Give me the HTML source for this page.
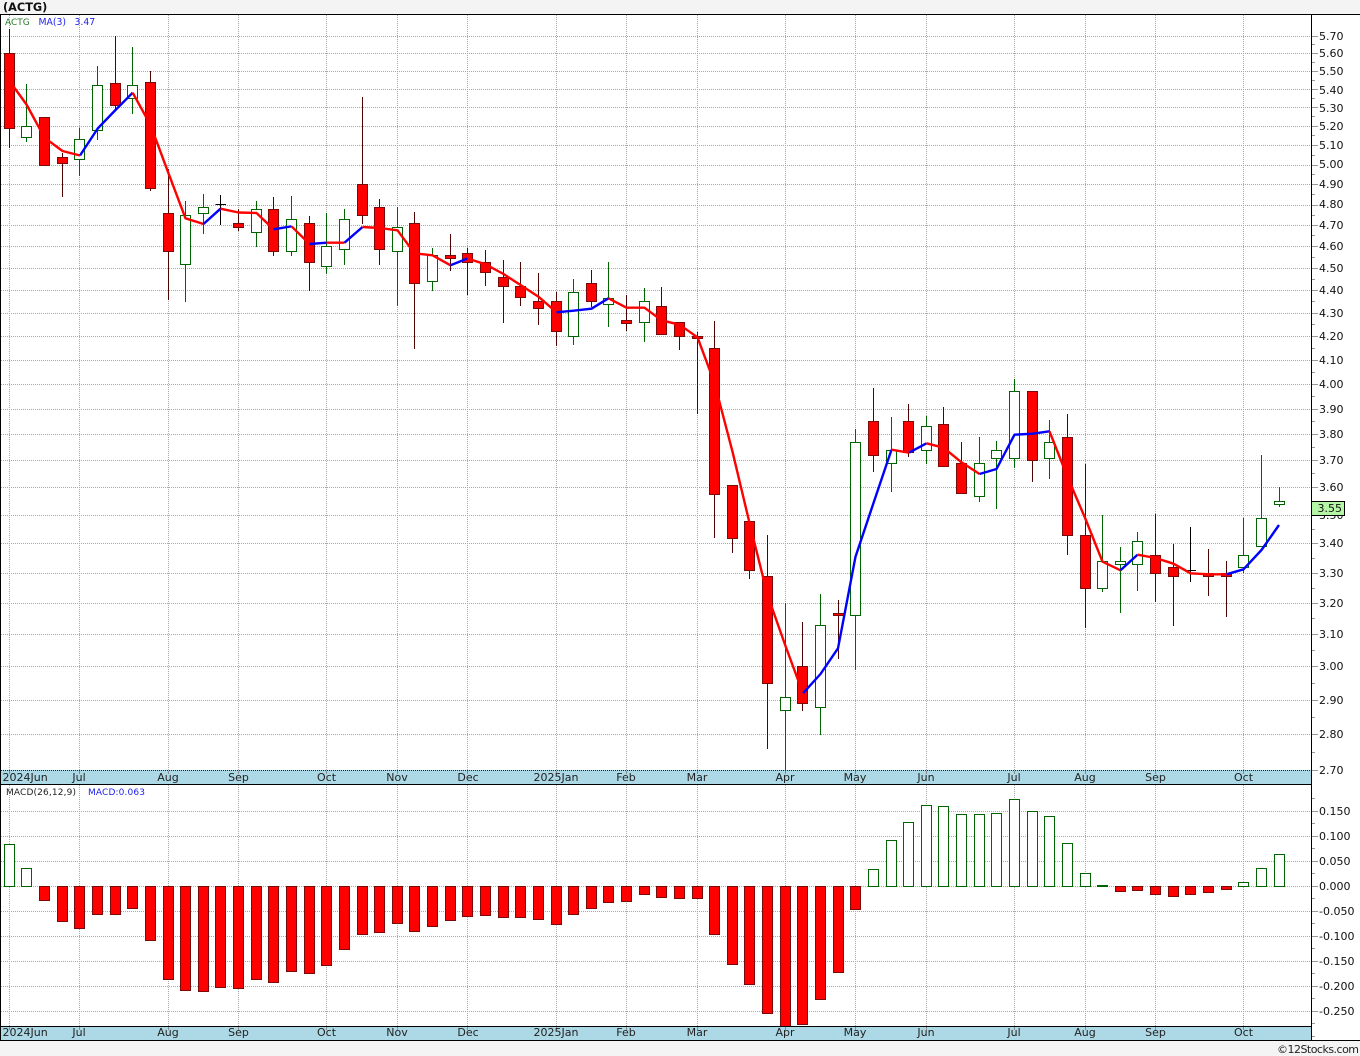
<!DOCTYPE html>
<html><head><meta charset="utf-8"><title>ACTG</title>
<style>
html,body{margin:0;padding:0;background:#f4f4f4;width:1360px;height:1056px;overflow:hidden}
svg{display:block;position:absolute;left:0;top:0}
text{font-family:"DejaVu Sans","Liberation Sans",sans-serif;font-size:11px;fill:#111}
.m text{text-anchor:middle;fill:#222}
</style></head><body>
<svg width="1360" height="1056" viewBox="0 0 1360 1056" xmlns="http://www.w3.org/2000/svg">
<rect x="0" y="0" width="1360" height="1056" fill="#f4f4f4"/>
<rect x="0" y="14" width="1360" height="1027" fill="#fff"/>

<!-- grid -->
<g shape-rendering="crispEdges" fill="none" stroke="#a8a8a8" stroke-dasharray="1 1">
<path d="M1 36.5H1311M1 53.5H1311M1 71.5H1311M1 89.5H1311M1 107.5H1311M1 126.5H1311M1 145.5H1311M1 165.5H1311M1 184.5H1311M1 205.5H1311M1 225.5H1311M1 246.5H1311M1 268.5H1311M1 290.5H1311M1 313.5H1311M1 336.5H1311M1 360.5H1311M1 384.5H1311M1 409.5H1311M1 434.5H1311M1 460.5H1311M1 487.5H1311M1 515.5H1311M1 543.5H1311M1 573.5H1311M1 603.5H1311M1 634.5H1311M1 666.5H1311M1 700.5H1311M1 734.5H1311"/>
<path d="M1 811.5H1311M1 836.5H1311M1 861.5H1311M1 886.5H1311M1 911.5H1311M1 936.5H1311M1 961.5H1311M1 986.5H1311M1 1011.5H1311"/>
<path d="M9.5 15V770M79.5 15V770M168.5 15V770M238.5 15V770M326.5 15V770M397.5 15V770M467.5 15V770M556.5 15V770M626.5 15V770M697.5 15V770M785.5 15V770M855.5 15V770M926.5 15V770M1014.5 15V770M1085.5 15V770M1155.5 15V770M1243.5 15V770"/>
<path d="M9.5 785V1026M79.5 785V1026M168.5 785V1026M238.5 785V1026M326.5 785V1026M397.5 785V1026M467.5 785V1026M556.5 785V1026M626.5 785V1026M697.5 785V1026M785.5 785V1026M855.5 785V1026M926.5 785V1026M1014.5 785V1026M1085.5 785V1026M1155.5 785V1026M1243.5 785V1026"/>
</g>

<!-- wicks -->
<g shape-rendering="crispEdges" fill="none" stroke-width="1">
<path stroke="#500505" d="M9.5 29V148M62.5 153V197M115.5 36V109M150.5 71V191M168.5 169V300M238.5 209V231M273.5 197V256M309.5 216V291M362.5 97V224M379.5 199V265M414.5 212V349M450.5 234V271M467.5 248V295M485.5 250V286M503.5 260V323M520.5 262V306M538.5 273V325M556.5 292V346M591.5 270V307M626.5 295V331M661.5 287V334M679.5 322V350M697.5 332V414M714.5 321V538M732.5 485V553M749.5 521V579M767.5 535V749M802.5 622V711M838.5 600V659M873.5 388V472M908.5 404V457M943.5 407V467M961.5 442V494M1032.5 391V482M1067.5 414V555M1085.5 464V628M1155.5 514V602M1173.5 544V626M1208.5 549V596M1226.5 561V617"/>
<path stroke="#006400" d="M26.5 84V142M79.5 128V176M97.5 66V140M132.5 47V114M185.5 201V302M203.5 194V234M256.5 201V247M291.5 196V256M326.5 213V274M344.5 209V265M397.5 207V306M432.5 248V291M573.5 279V345M608.5 262V327M644.5 288V342M785.5 603V770M820.5 594V735M855.5 429V670M891.5 417V492M926.5 416V464M979.5 437V502M996.5 441V509M1014.5 379V468M1049.5 420V479M1102.5 515V592M1120.5 547V613M1137.5 532V591M1243.5 518V573M1261.5 455V518M1279.5 487V507"/>
<path stroke="#000" d="M220.5 195V225M215.5 204.5H226M1190.5 527V582M1185.5 570.5H1196"/>
</g>

<!-- bodies -->
<g shape-rendering="crispEdges" stroke-width="1">
<path fill="#ff0000" stroke="#7a0a0a" d="M4.5 53.5h10V128.5h-10zM39.5 117.5h10V165.5h-10zM57.5 157.5h10V163.5h-10zM110.5 83.5h10V105.5h-10zM145.5 82.5h10V188.5h-10zM163.5 213.5h10V251.5h-10zM233.5 223.5h10V227.5h-10zM268.5 209.5h10V251.5h-10zM304.5 223.5h10V262.5h-10zM357.5 184.5h10V215.5h-10zM374.5 207.5h10V249.5h-10zM409.5 223.5h10V283.5h-10zM445.5 255.5h10V258.5h-10zM462.5 253.5h10V262.5h-10zM480.5 262.5h10V272.5h-10zM498.5 277.5h10V286.5h-10zM515.5 286.5h10V297.5h-10zM533.5 301.5h10V308.5h-10zM551.5 301.5h10V331.5h-10zM586.5 283.5h10V301.5h-10zM621.5 320.5h10V323.5h-10zM656.5 306.5h10V334.5h-10zM674.5 322.5h10V336.5h-10zM692.5 336.5h10V338.5h-10zM709.5 348.5h10V494.5h-10zM727.5 485.5h10V538.5h-10zM744.5 521.5h10V570.5h-10zM762.5 576.5h10V683.5h-10zM797.5 666.5h10V703.5h-10zM833.5 613.5h10V615.5h-10zM868.5 421.5h10V455.5h-10zM903.5 421.5h10V452.5h-10zM938.5 424.5h10V466.5h-10zM956.5 463.5h10V493.5h-10zM1027.5 391.5h10V460.5h-10zM1062.5 437.5h10V535.5h-10zM1080.5 535.5h10V588.5h-10zM1150.5 555.5h10V573.5h-10zM1168.5 567.5h10V576.5h-10zM1203.5 573.5h10V576.5h-10zM1221.5 573.5h10V576.5h-10z"/>
<path fill="#fff" stroke="#006400" d="M21.5 126.5h10V137.5h-10zM74.5 139.5h10V159.5h-10zM92.5 85.5h10V130.5h-10zM127.5 85.5h10V98.5h-10zM180.5 215.5h10V264.5h-10zM198.5 207.5h10V213.5h-10zM251.5 209.5h10V232.5h-10zM286.5 219.5h10V251.5h-10zM321.5 246.5h10V266.5h-10zM339.5 219.5h10V249.5h-10zM392.5 227.5h10V251.5h-10zM427.5 255.5h10V281.5h-10zM568.5 292.5h10V336.5h-10zM603.5 298.5h10V304.5h-10zM639.5 301.5h10V322.5h-10zM780.5 697.5h10V710.5h-10zM815.5 625.5h10V707.5h-10zM850.5 442.5h10V615.5h-10zM886.5 450.5h10V463.5h-10zM921.5 426.5h10V450.5h-10zM974.5 463.5h10V496.5h-10zM991.5 450.5h10V458.5h-10zM1009.5 391.5h10V458.5h-10zM1044.5 442.5h10V458.5h-10zM1097.5 561.5h10V588.5h-10zM1115.5 561.5h10V564.5h-10zM1132.5 541.5h10V564.5h-10zM1238.5 555.5h10V567.5h-10zM1256.5 518.5h10V546.5h-10zM1274.5 501.5h10V504.5h-10z"/>
</g>

<!-- moving average -->
<g fill="none" stroke-width="2.4" stroke-linejoin="round">
<polyline stroke="#ff0000" points="9.5,81 26.5,104.5 44.5,137.7 62.5,151 80,155.5"/>
<polyline stroke="#0000ff" points="80,155.5 97.7,128.5 115.5,110 132.7,92.7"/>
<polyline stroke="#ff0000" points="132.7,92.7 150.5,125 168.5,173.3 185.5,218.3 203.5,224"/>
<polyline stroke="#0000ff" points="203.5,224 220.5,208.7"/>
<polyline stroke="#ff0000" points="220.5,208.7 238.5,212.5 256.5,213 273.5,229.3"/>
<polyline stroke="#0000ff" points="273.5,229.3 291.5,226.3"/>
<polyline stroke="#ff0000" points="291.5,226.3 309.5,244"/>
<polyline stroke="#0000ff" points="309.5,244 326.5,242.7"/>
<polyline stroke="#ff0000" points="326.5,242.7 344.5,242.7"/>
<polyline stroke="#0000ff" points="344.5,242.7 362.5,227"/>
<polyline stroke="#ff0000" points="362.5,227 379.5,228 397.5,230.3 414.5,253.3 432.5,255.3 450.5,265.3"/>
<polyline stroke="#0000ff" points="450.5,265.3 467.5,258.5"/>
<polyline stroke="#ff0000" points="467.5,258.5 485.5,264.3 503.5,274 520.5,285 538.5,296.7 556.5,312.3"/>
<polyline stroke="#0000ff" points="556.5,312.3 573.5,310.7 591.5,308.7 608.5,298.3"/>
<polyline stroke="#ff0000" points="608.5,298.3 626.5,307.7 644.5,307.7 661.5,320.3 679.5,324.7 697.5,337.3 714.5,383 732.5,451.7 749.5,523 767.5,595 785.5,646 803,693.3"/>
<polyline stroke="#0000ff" points="803,693.3 820.5,674 838,648.3 855.5,556.7 873.5,503 891.5,449.7"/>
<polyline stroke="#ff0000" points="891.5,449.7 909,452.7"/>
<polyline stroke="#0000ff" points="909,452.7 926.5,443.3"/>
<polyline stroke="#ff0000" points="926.5,443.3 943.5,447.7 961.5,462.3 979.5,474"/>
<polyline stroke="#0000ff" points="979.5,474 996.5,469 1014.5,434.7 1032.5,433.7 1049.5,431.3"/>
<polyline stroke="#ff0000" points="1049.5,431.3 1067.5,477 1085.5,519 1102.5,561.7 1120.5,570.3"/>
<polyline stroke="#0000ff" points="1120.5,570.3 1137.5,554.7"/>
<polyline stroke="#ff0000" points="1137.5,554.7 1155.5,558 1173.5,563.7 1190.5,573.3 1208.5,574.3 1226.5,574.3"/>
<polyline stroke="#0000ff" points="1226.5,574.3 1243.5,569.3 1261.5,550 1279,525"/>
</g>

<!-- MACD bars -->
<g shape-rendering="crispEdges" stroke-width="1">
<path fill="#fff" stroke="#006400" d="M4.5 844.5h10V886.5h-10zM21.5 868.5h10V886.5h-10zM868.5 869.5h10V886.5h-10zM886.5 840.5h10V886.5h-10zM903.5 822.5h10V886.5h-10zM921.5 805.5h10V886.5h-10zM938.5 806.5h10V886.5h-10zM956.5 814.5h10V886.5h-10zM974.5 814.5h10V886.5h-10zM991.5 813.5h10V886.5h-10zM1009.5 799.5h10V886.5h-10zM1027.5 811.5h10V886.5h-10zM1044.5 816.5h10V886.5h-10zM1062.5 843.5h10V886.5h-10zM1080.5 873.5h10V886.5h-10zM1097.5 885.5h10V886.5h-10zM1238.5 882.5h10V886.5h-10zM1256.5 868.5h10V886.5h-10zM1274.5 854.5h10V886.5h-10z"/>
<path fill="#ff0000" stroke="#7a0a0a" d="M39.5 886.5h10V900.5h-10zM57.5 886.5h10V921.5h-10zM74.5 886.5h10V928.5h-10zM92.5 886.5h10V914.5h-10zM110.5 886.5h10V914.5h-10zM127.5 886.5h10V908.5h-10zM145.5 886.5h10V940.5h-10zM163.5 886.5h10V979.5h-10zM180.5 886.5h10V990.5h-10zM198.5 886.5h10V991.5h-10zM215.5 886.5h10V987.5h-10zM233.5 886.5h10V988.5h-10zM251.5 886.5h10V979.5h-10zM268.5 886.5h10V982.5h-10zM286.5 886.5h10V971.5h-10zM304.5 886.5h10V973.5h-10zM321.5 886.5h10V965.5h-10zM339.5 886.5h10V949.5h-10zM357.5 886.5h10V934.5h-10zM374.5 886.5h10V932.5h-10zM392.5 886.5h10V923.5h-10zM409.5 886.5h10V931.5h-10zM427.5 886.5h10V926.5h-10zM445.5 886.5h10V920.5h-10zM462.5 886.5h10V916.5h-10zM480.5 886.5h10V915.5h-10zM498.5 886.5h10V917.5h-10zM515.5 886.5h10V917.5h-10zM533.5 886.5h10V919.5h-10zM551.5 886.5h10V924.5h-10zM568.5 886.5h10V914.5h-10zM586.5 886.5h10V908.5h-10zM603.5 886.5h10V902.5h-10zM621.5 886.5h10V901.5h-10zM639.5 886.5h10V894.5h-10zM656.5 886.5h10V897.5h-10zM674.5 886.5h10V898.5h-10zM692.5 886.5h10V898.5h-10zM709.5 886.5h10V934.5h-10zM727.5 886.5h10V964.5h-10zM744.5 886.5h10V984.5h-10zM762.5 886.5h10V1013.5h-10zM780.5 886.5h10V1030h-10zM797.5 886.5h10V1024.5h-10zM815.5 886.5h10V999.5h-10zM833.5 886.5h10V972.5h-10zM850.5 886.5h10V909.5h-10zM1115.5 886.5h10V891.5h-10zM1132.5 886.5h10V890.5h-10zM1150.5 886.5h10V894.5h-10zM1168.5 886.5h10V896.5h-10zM1185.5 886.5h10V894.5h-10zM1203.5 886.5h10V892.5h-10zM1221.5 886.5h10V889.5h-10z"/>
</g>

<!-- strips -->
<g shape-rendering="crispEdges">
<rect x="1" y="770" width="1310" height="14" fill="#add8e6"/>
<rect x="1" y="1026" width="1310" height="14" fill="#add8e6"/>
<path d="M1 770.5H1311" stroke="#222" stroke-dasharray="1 1" fill="none"/>
<path stroke="#8c8c8c" fill="none" d="M9.5 771V774M79.5 771V774M168.5 771V774M238.5 771V774M326.5 771V774M397.5 771V774M467.5 771V774M556.5 771V774M626.5 771V774M697.5 771V774M785.5 771V774M855.5 771V774M926.5 771V774M1014.5 771V774M1085.5 771V774M1155.5 771V774M1243.5 771V774M9.5 1027V1030M79.5 1027V1030M168.5 1027V1030M238.5 1027V1030M326.5 1027V1030M397.5 1027V1030M467.5 1027V1030M556.5 1027V1030M626.5 1027V1030M697.5 1027V1030M785.5 1027V1030M855.5 1027V1030M926.5 1027V1030M1014.5 1027V1030M1085.5 1027V1030M1155.5 1027V1030M1243.5 1027V1030"/>
<!-- axis panel background -->
<rect x="1312" y="15" width="48" height="1025" fill="#fff"/>
<!-- axis ticks -->
<path stroke="#999" fill="none" d="M1311 36.5h7M1311 53.5h7M1311 71.5h7M1311 89.5h7M1311 107.5h7M1311 126.5h7M1311 145.5h7M1311 165.5h7M1311 184.5h7M1311 205.5h7M1311 225.5h7M1311 246.5h7M1311 268.5h7M1311 290.5h7M1311 313.5h7M1311 336.5h7M1311 360.5h7M1311 384.5h7M1311 409.5h7M1311 434.5h7M1311 460.5h7M1311 487.5h7M1311 515.5h7M1311 543.5h7M1311 573.5h7M1311 603.5h7M1311 634.5h7M1311 666.5h7M1311 700.5h7M1311 734.5h7M1311 770.5h7M1311 44.5h4M1311 62.5h4M1311 80.5h4M1311 98.5h4M1311 116.5h4M1311 135.5h4M1311 155.5h4M1311 174.5h4M1311 194.5h4M1311 215.5h4M1311 235.5h4M1311 257.5h4M1311 279.5h4M1311 301.5h4M1311 324.5h4M1311 348.5h4M1311 372.5h4M1311 396.5h4M1311 421.5h4M1311 447.5h4M1311 473.5h4M1311 501.5h4M1311 529.5h4M1311 558.5h4M1311 588.5h4M1311 618.5h4M1311 650.5h4M1311 683.5h4M1311 717.5h4M1311 752.5h4M1311 811.5h7M1311 836.5h7M1311 861.5h7M1311 886.5h7M1311 911.5h7M1311 936.5h7M1311 961.5h7M1311 986.5h7M1311 1011.5h7M1311 798.5h4M1311 823.5h4M1311 848.5h4M1311 873.5h4M1311 898.5h4M1311 923.5h4M1311 948.5h4M1311 973.5h4M1311 998.5h4M1311 1023.5h4M1311 1036.5h4"/>
<!-- frame -->
<path stroke="#000" fill="none" d="M0 14.5H1360M0 784.5H1311M0 1026.5H1311M0 1040.5H1360M1311.5 14V1041M0.5 14V1041"/>
</g>

<!-- title + legends -->
<text x="3" y="11" style="font-weight:bold;font-size:11.3px;fill:#111">(ACTG)</text>
<text x="5" y="25" style="font-size:9px;fill:#2a7a2a">ACTG</text>
<text x="38.5" y="25" style="font-size:9.3px;fill:#2222ee">MA(3)</text>
<text x="74.5" y="25" style="font-size:9.3px;fill:#2222ee">3.47</text>
<text x="6" y="795" textLength="70" style="font-size:9px;fill:#222">MACD(26,12,9)</text>
<text x="88" y="795" textLength="57" style="font-size:9px;fill:#2222ee">MACD:0.063</text>

<!-- price axis labels -->
<g>
<text x="1319" y="40">5.70</text><text x="1319" y="57">5.60</text><text x="1319" y="75">5.50</text><text x="1319" y="94">5.40</text><text x="1319" y="112">5.30</text><text x="1319" y="130">5.20</text><text x="1319" y="149">5.10</text><text x="1319" y="168">5.00</text><text x="1319" y="188">4.90</text><text x="1319" y="208">4.80</text><text x="1319" y="229">4.70</text><text x="1319" y="250">4.60</text><text x="1319" y="272">4.50</text><text x="1319" y="294">4.40</text><text x="1319" y="317">4.30</text><text x="1319" y="340">4.20</text><text x="1319" y="364">4.10</text><text x="1319" y="388">4.00</text><text x="1319" y="413">3.90</text><text x="1319" y="438">3.80</text><text x="1319" y="464">3.70</text><text x="1319" y="491">3.60</text><text x="1319" y="519">3.50</text><text x="1319" y="547">3.40</text><text x="1319" y="577">3.30</text><text x="1319" y="607">3.20</text><text x="1319" y="638">3.10</text><text x="1319" y="670">3.00</text><text x="1319" y="704">2.90</text><text x="1319" y="738">2.80</text><text x="1319" y="774">2.70</text>
</g>
<rect x="1311.5" y="501.5" width="33" height="14" fill="#b4f5a6" stroke="#000" shape-rendering="crispEdges"/>
<text x="1317.5" y="512">3.55</text>

<!-- MACD axis labels -->
<g>
<text x="1319" y="815">0.150</text><text x="1319" y="840">0.100</text><text x="1319" y="865">0.050</text><text x="1319" y="890">0.000</text><text x="1319" y="915">-0.050</text><text x="1319" y="940">-0.100</text><text x="1319" y="965">-0.150</text><text x="1319" y="990">-0.200</text><text x="1319" y="1015">-0.250</text>
</g>

<!-- date labels -->
<text x="2.5" y="781" style="fill:#222">2024Jun</text>
<g class="m">
<text x="79" y="781">Jul</text><text x="168" y="781">Aug</text><text x="238.5" y="781">Sep</text><text x="326.5" y="781">Oct</text><text x="397" y="781">Nov</text><text x="468" y="781">Dec</text><text x="556" y="781">2025Jan</text><text x="626" y="781">Feb</text><text x="697" y="781">Mar</text><text x="785" y="781">Apr</text><text x="855" y="781">May</text><text x="926" y="781">Jun</text><text x="1014" y="781">Jul</text><text x="1085" y="781">Aug</text><text x="1155.5" y="781">Sep</text><text x="1243.5" y="781">Oct</text>
</g>
<text x="2.5" y="1036" style="fill:#222">2024Jun</text>
<g class="m">
<text x="79" y="1036">Jul</text><text x="168" y="1036">Aug</text><text x="238.5" y="1036">Sep</text><text x="326.5" y="1036">Oct</text><text x="397" y="1036">Nov</text><text x="468" y="1036">Dec</text><text x="556" y="1036">2025Jan</text><text x="626" y="1036">Feb</text><text x="697" y="1036">Mar</text><text x="785" y="1036">Apr</text><text x="855" y="1036">May</text><text x="926" y="1036">Jun</text><text x="1014" y="1036">Jul</text><text x="1085" y="1036">Aug</text><text x="1155.5" y="1036">Sep</text><text x="1243.5" y="1036">Oct</text>
</g>

<!-- footer -->
<text x="1277" y="1053" textLength="82" style="font-size:11px;fill:#222">©12Stocks.com</text>
</svg>
</body></html>
